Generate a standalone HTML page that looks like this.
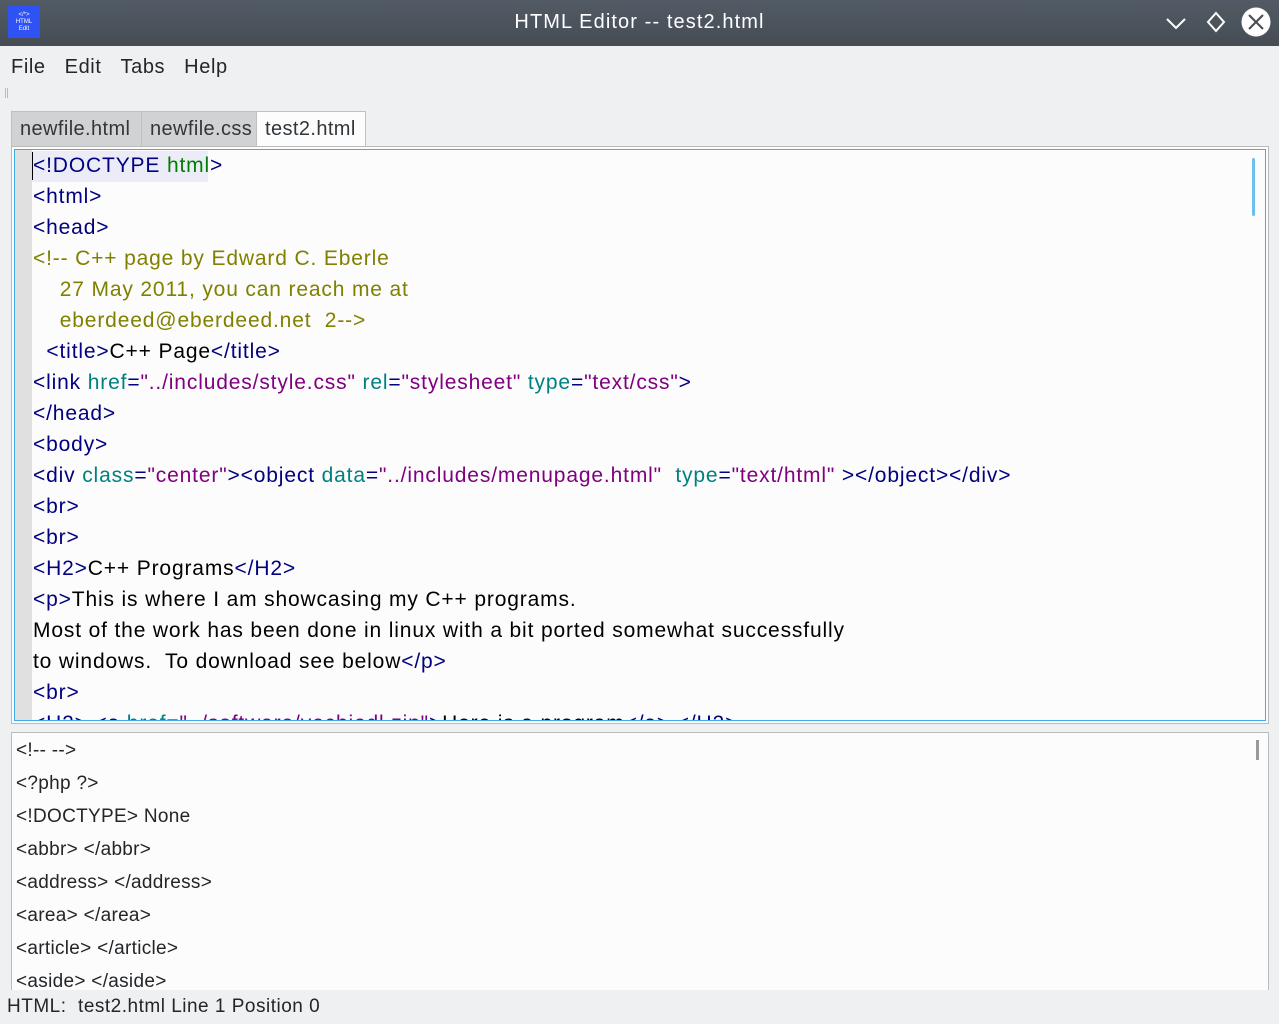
<!DOCTYPE html>
<html><head><style>
*{margin:0;padding:0;box-sizing:border-box}
body{width:1279px;height:1021px;background:#eff0f1;font-family:"Liberation Sans",sans-serif;position:relative;overflow:hidden;color:#232629}
.title{position:absolute;left:0;top:0;width:1279px;height:46px;background:linear-gradient(#525b65,#454c54);color:#fff;font-size:20px;text-align:center;line-height:44px;letter-spacing:1.1px}
.logo{position:absolute;left:8px;top:6px;width:32px;height:32px;background:#2f52f5;color:#fff;font-size:6px;line-height:7px;text-align:center;padding-top:6px;letter-spacing:0}
.menu{position:absolute;top:56px;left:11px;font-size:20px;letter-spacing:0.6px}
.menu span{margin-right:19px}
.tab{position:absolute;top:111px;height:35px;font-size:20px;line-height:34px;padding:0 8px;background:#d1d2d4;border:1px solid #c0c0c0;border-bottom:none;color:#31363b;letter-spacing:0.4px;white-space:nowrap;overflow:hidden}
.editor{position:absolute;left:11px;top:146px;width:1258px;height:578px;border:1px solid #bbb;background:#fcfcfc}
.inner{position:absolute;left:2px;top:2px;right:2px;bottom:2px;border:1px solid #3daee9;overflow:hidden}
.gutter{position:absolute;left:0;top:0;width:17px;height:100%;background:#e0e0e0}
.code{position:absolute;left:18px;top:0px;font-size:21px;line-height:31px;white-space:pre;color:#000;letter-spacing:0.85px}
.t{color:#000080}.a{color:#008080}.v{color:#800080}.c{color:#808000}.g{color:#008000}
.sb{position:absolute;right:10px;top:8px;width:3px;height:58px;background:#6dc0ec;border-radius:2px}
.list{position:absolute;left:11px;top:732px;width:1258px;height:270px;border:1px solid #bbb;background:#fcfcfc;overflow:hidden}
.list div{font-size:19px;height:33px;line-height:35px;padding-left:4px;color:#232629;letter-spacing:0.3px}
.status{position:absolute;left:0;top:990px;width:1279px;height:31px;background:#eff0f1;font-size:19px;line-height:34px;padding-left:7px;white-space:pre;letter-spacing:0.5px}
</style></head><body>
<div class="title"><div class="logo">&lt;/*&gt;<br>HTML<br>Edit</div>HTML Editor -- test2.html
<svg style="position:absolute;left:1165px;top:13px" width="22" height="20"><path d="M2 6l9 9 9-9" stroke="#fff" stroke-width="2" fill="none"/></svg>
<svg style="position:absolute;left:1205px;top:11px" width="22" height="22"><path d="M11 2l8 9-8 9-8-9z" stroke="#fff" stroke-width="2" fill="none"/></svg>
<svg style="position:absolute;left:1241px;top:7px" width="30" height="30"><circle cx="15" cy="15" r="14.5" fill="#fff"/><path d="M8 8l14 14M22 8L8 22" stroke="#454c54" stroke-width="2"/></svg>
</div>
<div class="menu"><span>File</span><span>Edit</span><span>Tabs</span><span>Help</span></div>
<div style="position:absolute;left:5px;top:88px;width:3px;height:10px;border-left:1px solid #bbb;border-right:1px solid #bbb"></div>
<div class="tab" style="left:11px;width:131px">newfile.html</div>
<div class="tab" style="left:141px;width:116px">newfile.css</div>
<div class="tab" style="left:256px;width:110px;background:#fcfcfc;height:36px">test2.html</div>
<div class="editor"><div class="inner"><div class="gutter"></div><div class="sb"></div>
<div style="position:absolute;left:17px;top:1px;width:176px;height:31px;background:#ececf8"></div>
<div style="position:absolute;left:17px;top:2px;width:1px;height:28px;background:#000"></div>
<div class="code"><span class="t">&lt;!DOCTYPE </span><span class="g">html</span><span class="t">&gt;</span>
<span class="t">&lt;html&gt;</span>
<span class="t">&lt;head&gt;</span>
<span class="c">&lt;!-- C++ page by Edward C. Eberle
    27 May 2011, you can reach me at
    eberdeed@eberdeed.net  2--&gt;</span>
  <span class="t">&lt;title&gt;</span>C++ Page<span class="t">&lt;/title&gt;</span>
<span class="t">&lt;link </span><span class="a">href</span><span class="t">=</span><span class="v">"../includes/style.css"</span> <span class="a">rel</span><span class="t">=</span><span class="v">"stylesheet"</span> <span class="a">type</span><span class="t">=</span><span class="v">"text/css"</span><span class="t">&gt;</span>
<span class="t">&lt;/head&gt;</span>
<span class="t">&lt;body&gt;</span>
<span class="t">&lt;div </span><span class="a">class</span><span class="t">=</span><span class="v">"center"</span><span class="t">&gt;&lt;object </span><span class="a">data</span><span class="t">=</span><span class="v">"../includes/menupage.html"</span>  <span class="a">type</span><span class="t">=</span><span class="v">"text/html"</span> <span class="t">&gt;&lt;/object&gt;&lt;/div&gt;</span>
<span class="t">&lt;br&gt;</span>
<span class="t">&lt;br&gt;</span>
<span class="t">&lt;H2&gt;</span>C++ Programs<span class="t">&lt;/H2&gt;</span>
<span class="t">&lt;p&gt;</span>This is where I am showcasing my C++ programs.
Most of the work has been done in linux with a bit ported somewhat successfully
to windows.  To download see below<span class="t">&lt;/p&gt;</span>
<span class="t">&lt;br&gt;</span>
<span class="t">&lt;H2&gt; &lt;a </span><span class="a">href</span><span class="t">=</span><span class="v">"../software/vecbiedl.zip"</span><span class="t">&gt;</span>Here is a program<span class="t">&lt;/a&gt; &lt;/H2&gt;</span></div>
</div></div>
<div class="list"><div style="position:absolute;right:9px;top:7px;width:3px;height:20px;background:#999;padding:0"></div>
<div>&lt;!-- --&gt;</div><div>&lt;?php ?&gt;</div><div>&lt;!DOCTYPE&gt; None</div><div>&lt;abbr&gt; &lt;/abbr&gt;</div><div>&lt;address&gt; &lt;/address&gt;</div><div>&lt;area&gt; &lt;/area&gt;</div><div>&lt;article&gt; &lt;/article&gt;</div><div>&lt;aside&gt; &lt;/aside&gt;</div></div>
<div class="status">HTML:  test2.html Line 1 Position 0</div>
</body></html>
